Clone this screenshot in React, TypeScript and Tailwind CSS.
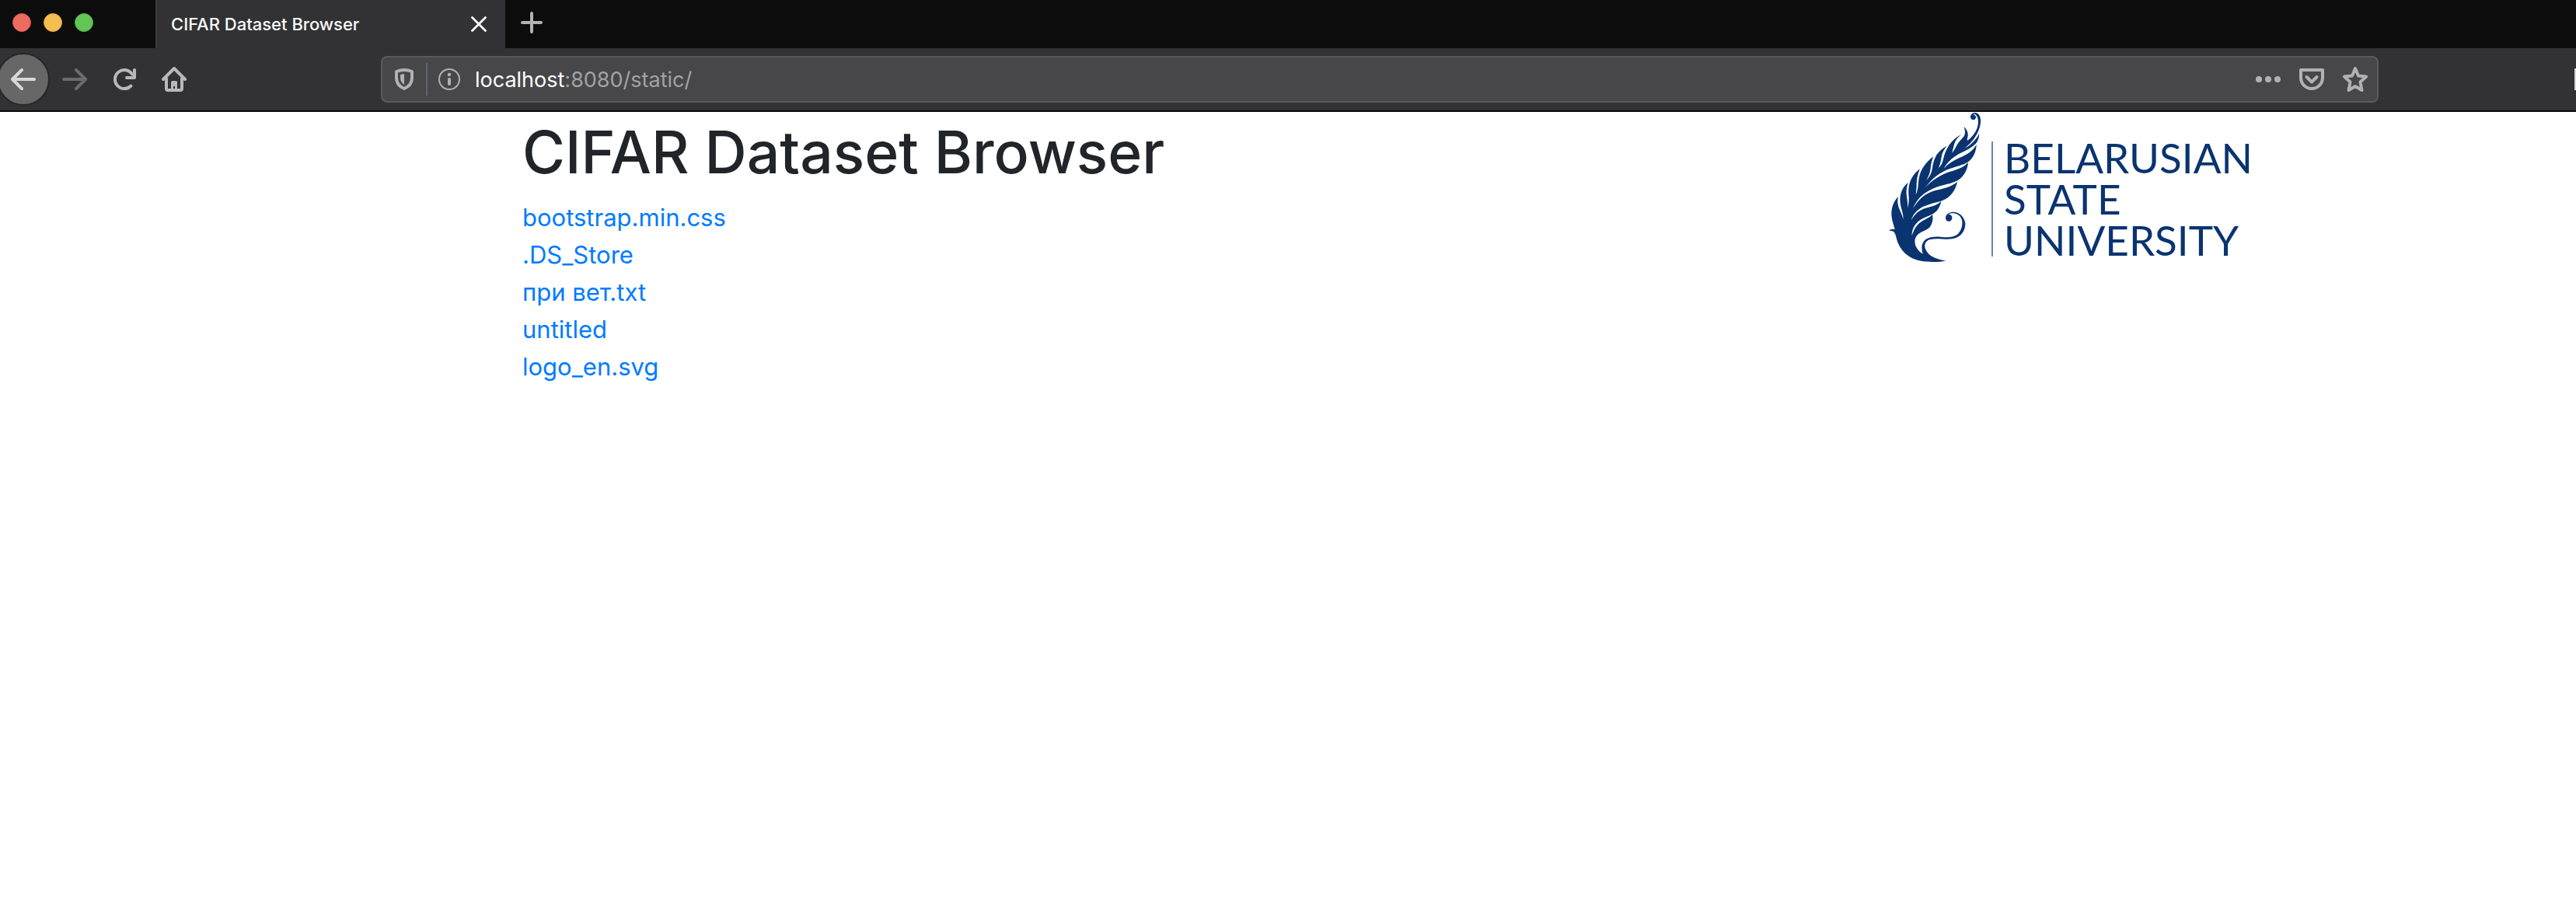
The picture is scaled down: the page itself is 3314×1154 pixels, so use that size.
import React from "react";

const files = ["bootstrap.min.css", ".DS_Store", "при вет.txt", "untitled", "logo_en.svg"];

const iconButton = "flex shrink-0 items-center justify-center text-[#b8b8ba]";

function Feather() {
  return (
    <svg viewBox="30 12 360 582" className="h-[194px] w-[120px] shrink-0" aria-hidden="true">
      <path
        fill="#0a3470"
        d="M30 470 C38 464 46 463 53 466 C50 450 40 430 40 402 C41 376 50 355 66 339 C63 352 63 366 68 380 C74 396 82 410 86 427 C86 408 80 392 76 376 C71 352 73 330 82 312 C88 301 95 292 104 285 C98 305 96 320 99 338 C102 358 103 370 102 384 C108 362 108 346 106 328 C105 306 108 286 118 268 C126 253 137 241 150 232 C142 250 138 268 137 288 C137 306 135 318 134 332 C141 316 143 302 144 284 C146 262 152 240 165 222 C176 207 188 194 202 184 C194 204 193 214 191 230 C189 248 182 262 175 276 C186 264 194 250 197 234 C200 212 204 196 214 178 C226 162 238 151 254 143 C241 158 235 172 233 186 C231 202 227 216 222 229 C234 218 238 204 241 190 C245 172 252 156 264 138 C276 120 292 108 310 98 C294 112 285 124 281 142 C278 152 276 162 274 170 C281 162 285 154 289 146 C296 130 310 118 321 104 C326 92 324 82 319 68 C332 80 338 94 334 110 C332 118 331 121 334 122 C352 110 366 90 372 70 C377 50 376 28 362 20 C358 19 356 20 357 22 C366 25 368 33 364 38 C358 46 346 42 345 32 C345 21 354 15 364 15 C380 17 386 34 384 54 C381 82 366 108 348 128 C339 138 330 146 320 154 C346 142 366 120 379 95 C378 114 372 130 360 139 C342 156 318 164 292 179 C270 192 256 208 242 230 C260 211 280 199 302 189 C330 177 354 164 368 138 C368 160 358 184 344 198 C326 216 296 220 266 231 C226 244 194 272 170 304 C196 277 226 256 264 243 C296 234 320 226 336 206 C334 236 318 262 296 276 C272 290 240 292 212 303 C168 320 140 344 123 384 C144 351 166 330 194 320 C228 308 264 308 294 282 C288 314 268 340 242 352 C224 360 204 362 184 370 C148 380 126 400 116 430 C130 406 146 391 172 383 C194 377 214 374 232 356 C228 378 216 396 202 404 C190 412 174 415 160 424 C134 438 118 460 119 490 C126 464 140 443 162 431 C178 423 190 418 198 408 C202 424 198 446 186 459 C172 470 152 474 139 488 C122 508 130 540 161 560 C154 536 156 516 172 504 C186 494 210 492 230 494 C256 498 282 496 296 484 C314 466 318 436 308 420 C298 404 274 398 258 408 C272 404 278 420 272 428 C264 440 250 434 249 422 C248 406 264 398 280 398 C306 400 322 420 325 442 C326 472 306 498 274 502 C250 506 214 498 190 504 C172 508 166 524 170 538 C180 566 206 580 250 587 C226 591 190 592 164 589 C118 584 84 560 66 520 C58 502 58 482 48 474 C42 470 36 470 30 470 Z"
      />
    </svg>
  );
}

function TabStrip() {
  return (
    <div className="flex h-[62px] bg-[#0c0c0c]">
      <div className="flex w-[200px] shrink-0 items-center gap-4 pb-1 pl-4">
        <button aria-label="Close window" className="size-6 rounded-full border border-[#d9534b] bg-[#ee6b60]" />
        <button aria-label="Minimize window" className="size-6 rounded-full border border-[#dda43c] bg-[#f6be50]" />
        <button aria-label="Zoom window" className="size-6 rounded-full border border-[#4fae43] bg-[#62c655]" />
      </div>
      <div className="flex w-[450px] shrink-0 items-center justify-between border-l-2 border-[#3e3e40] bg-[#323234] pr-6 pl-[18px]">
        <span className="text-[22px] leading-8 font-medium text-[#f9f9fa]">CIFAR Dataset Browser</span>
        <button aria-label="Close tab" className="text-[#f9f9fa]">
          <svg viewBox="0 0 20 20" className="size-5" fill="none" stroke="currentColor" strokeWidth="2.8" strokeLinecap="round">
            <path d="M1.5 1.5 18.5 18.5M18.5 1.5 1.5 18.5" />
          </svg>
        </button>
      </div>
      <button aria-label="New tab" className="flex w-[68px] items-center justify-center pb-1 text-[#b1b1b3]">
        <svg viewBox="0 0 28 28" className="size-7" fill="none" stroke="currentColor" strokeWidth="4" strokeLinecap="round">
          <path d="M14 2v24M2 14h24" />
        </svg>
      </button>
    </div>
  );
}

function Toolbar() {
  return (
    <div className="flex h-[82px] items-center overflow-hidden border-b-2 border-[#0c0c0d] bg-[#323234]">
      <button aria-label="Back" className="-ml-1 flex size-[68px] shrink-0 items-center justify-center rounded-full border-2 border-[#272729] bg-[#676767] text-[#d8d8d8]">
        <svg viewBox="0 0 32 32" className="size-8" fill="none" stroke="currentColor" strokeWidth="4" strokeLinecap="round" strokeLinejoin="round">
          <path d="M30 16H2M14 4 2 16l12 12" />
        </svg>
      </button>
      <button aria-label="Forward" className="ml-4 flex shrink-0 text-[#6b6b6d]">
        <svg viewBox="0 0 32 32" className="size-8" fill="none" stroke="currentColor" strokeWidth="4" strokeLinecap="round" strokeLinejoin="round">
          <path d="M2 16h28M18 4l12 12-12 12" />
        </svg>
      </button>
      <button aria-label="Reload" className={iconButton + " ml-8"}>
        <svg viewBox="0 0 32 32" className="size-8" fill="none" stroke="currentColor" strokeWidth="4" strokeLinecap="round" strokeLinejoin="round">
          <path d="M24.500 24.500A12 12 0 1 1 26 9.500M29 4v10H19" />
        </svg>
      </button>
      <button aria-label="Home" className={iconButton + " ml-8"}>
        <svg viewBox="0 0 32 32" className="size-8" fill="none" stroke="currentColor" strokeWidth="4" strokeLinecap="round" strokeLinejoin="round">
          <path d="M2 16 16 2l14 14M6 15v13q0 2 2 2h16q2 0 2-2V15" />
          <path d="M12 30V20q0-2 2-2h4q2 0 2 2v10h-3v-5h-2v5z" fill="currentColor" stroke="none" />
        </svg>
      </button>
      <div className="ml-[250px] flex h-[60px] w-[2570px] items-center rounded-lg border-2 border-[#5a5a5c] bg-[#474749] pr-3 pl-4 text-[#b1b1b3]">
        <button aria-label="Tracking protection" className="flex shrink-0">
          <svg viewBox="0 0 24 28" className="h-7 w-6" fill="none" stroke="currentColor" strokeWidth="4" strokeLinejoin="round">
            <path d="M2 4q5-2 10-2t10 2v8q0 10-10 14Q2 22 2 12z" />
            <path d="M12 7v14q-5-3-5-9V8z" fill="currentColor" stroke="none" />
          </svg>
        </button>
        <span className="ml-4 h-[42px] w-0.5 shrink-0 bg-[#5f646e]" />
        <button aria-label="Site information" className="ml-[14px] flex shrink-0">
          <svg viewBox="0 0 28 28" className="size-7" fill="none" stroke="currentColor">
            <circle cx="14" cy="14" r="13" strokeWidth="2" />
            <circle cx="14" cy="8" r="2.200" fill="currentColor" stroke="none" />
            <path d="M14 14v6" strokeWidth="4" strokeLinecap="round" />
          </svg>
        </button>
        <a href="#address" className="ml-[19px] pt-0.5 text-[27px] leading-10 text-[#a2a2a4]">
          <span className="text-white">localhost</span>:8080/static/
        </a>
        <span className="grow" />
        <button aria-label="Page actions" className="flex shrink-0">
          <svg viewBox="0 0 32 32" className="size-8" fill="currentColor">
            <circle cx="4" cy="16" r="4" />
            <circle cx="16" cy="16" r="4" />
            <circle cx="28" cy="16" r="4" />
          </svg>
        </button>
        <button aria-label="Save to Pocket" className="ml-6 flex shrink-0">
          <svg viewBox="0 0 32 32" className="size-8" fill="none" stroke="currentColor" strokeWidth="4" strokeLinecap="round" strokeLinejoin="round">
            <path d="M2 4h28v10a14 14 0 0 1-28 0z" />
            <path d="m9.500 13 6.500 6.500 6.500-6.500" />
          </svg>
        </button>
        <button aria-label="Bookmark this page" className="ml-6 flex shrink-0">
          <svg viewBox="0 0 32 32" className="size-8" fill="none" stroke="currentColor" strokeWidth="4" strokeLinejoin="round">
            <path d="m16 2 4 9.500 10 1-7.500 7L24.500 30 16 25 7.500 30l2-10.500L2 12.500l10-1z" />
          </svg>
        </button>
      </div>
      <button aria-label="Library" className="ml-auto h-7 w-0.5 shrink-0 bg-[#d7d7db]" />
    </div>
  );
}

export default function App() {
  return (
    <div className="min-h-screen bg-white font-['Inter','Liberation_Sans',sans-serif]">
      <header>
        <TabStrip />
        <Toolbar />
      </header>
      <main className="flex items-start justify-between pr-[416px] pl-[672px]">
        <div>
          <h1 className="mt-1 text-[75px] leading-[96px] font-medium text-[#212529]">CIFAR Dataset Browser</h1>
          <ul className="mt-3 text-[31px] leading-[48px] text-[#007bff]">
            {files.map((name) => (
              <li key={name}>
                <a href={"#" + name}>{name}</a>
              </li>
            ))}
          </ul>
        </div>
        <a href="#university" aria-label="Belarusian State University" className="flex items-start text-[#0a3470]">
          <Feather />
          <span className="mt-[38px] ml-3 h-[148px] w-0.5 shrink-0 bg-[#6d86ab]" />
          <span className="mt-8 ml-[14px] flex flex-col font-['Lato',sans-serif] text-[53px] leading-[53px]">
            <span>BELARUSIAN</span>
            <span>STATE</span>
            <span>UNIVERSITY</span>
          </span>
        </a>
      </main>
    </div>
  );
}
